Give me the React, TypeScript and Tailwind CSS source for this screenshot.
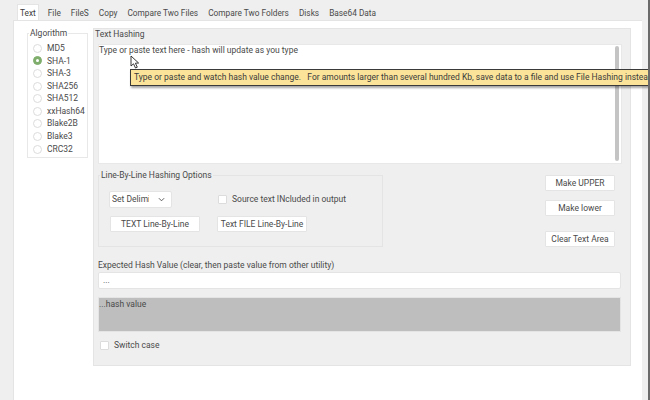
const font = "font-['Roboto','Noto_Sans',sans-serif]";

const tabs = ["Text", "File", "FileS", "Copy", "Compare Two Files", "Compare Two Folders", "Disks", "Base64 Data"];
const algorithms = ["MD5", "SHA-1", "SHA-3", "SHA256", "SHA512", "xxHash64", "Blake2B", "Blake3", "CRC32"];

function Btn({ label, className }: { label: string; className: string }) {
  return (
    <button className={`h-4 bg-white border border-[#e4e4e4] rounded-[1px] text-[8.5px] leading-none text-[#4a4a4a] text-center whitespace-nowrap ${className}`}>
      {label}
    </button>
  );
}

function Check() {
  return <span className="block w-[9px] h-[9px] bg-white border border-[#dcdcdc] rounded-[1px] shrink-0" />;
}

export default function App() {
  return (
    <div className={`${font} relative w-[650px] h-[400px] overflow-hidden bg-[#efefef] text-[8.5px] text-[#4a4a4a] flex flex-col pl-[13px] pr-2`}>
      {/* tab strip */}
      <div className="h-5 flex items-end pl-1 shrink-0 text-[8.3px]">
        {tabs.map((t, i) => (
          <span
            key={t}
            className={`h-4 flex items-center pt-[2px] whitespace-nowrap ${i === 0 ? "bg-white border border-[#e4e4e4] border-b-0 px-[2px] mr-1 text-[#3c3c3c]" : "px-[5px]"}`}
          >
            {t}
          </span>
        ))}
      </div>

      <div className="flex-1 bg-white border-l border-t border-[#e4e4e4] flex pl-[13px] pt-[7px] gap-[5px] items-start">
        {/* algorithm */}
        <div className="relative mt-[5px] w-[61px] h-[125px] border border-[#e8e8e8] pt-2 pl-[5px] flex flex-col">
          <span className="absolute -top-[6px] left-[1px] bg-white px-px leading-[10px] text-[8.5px]">Algorithm</span>
          {algorithms.map((a, i) => (
            <div key={a} className="h-[12.6px] flex items-center gap-[5px] shrink-0">
              <span className={`w-[9px] h-[9px] rounded-full border flex items-center justify-center shrink-0 ${i === 1 ? "bg-[#7fae6c] border-[#7fae6c]" : "bg-white border-[#dcdcdc]"}`}>
                {i === 1 && <span className="w-[3px] h-[3px] rounded-full bg-white" />}
              </span>
              <span>{a}</span>
            </div>
          ))}
        </div>

        {/* text hashing */}
        <div className="relative w-[538px] h-[338px] bg-[#efefef] border border-[#e4e4e4] px-1 pt-[15px]">
          <span className="absolute top-0 left-[1px] leading-[10px] text-[8.5px]">Text Hashing</span>

          <div className="relative h-[120px] w-[524px] bg-white border border-[#e8e8e8] leading-[10px] text-[8.5px]">
            Type or paste text here - hash will update as you type
            <span className="absolute right-[2px] top-[1px] bottom-[2px] w-1 rounded-sm bg-[#c4c4c4]" />
          </div>

          <div className="flex justify-between pr-[11px] mt-[11px]">
            <div className="relative w-[285px] h-[72px] border border-[#e4e4e4] pt-[15px] pl-[10px]">
              <span className="absolute -top-[6px] left-[1px] bg-[#efefef] px-px leading-[10px] text-[8.5px]">Line-By-Line Hashing Options</span>
              <div className="flex items-center h-[17px]">
                <div className="w-[63px] h-[17px] bg-white border border-[#e4e4e4] rounded-[2px] flex items-center">
                  <span className="w-[37px] ml-[2px] overflow-hidden whitespace-nowrap">Set Delimi</span>
                  <svg viewBox="0 0 8 8" className="w-[7px] h-[7px] ml-[9px]" fill="none" stroke="#4a4a4a" strokeWidth="1">
                    <path d="M1 2.5 L4 5.5 L7 2.5" />
                  </svg>
                </div>
                <span className="ml-[46px] mr-[5px]"><Check /></span>
                <span className="whitespace-nowrap">Source text INcluded in output</span>
              </div>
              <div className="flex gap-[17px] mt-2 pl-px">
                <Btn label="TEXT Line-By-Line" className="w-[90px]" />
                <Btn label="Text FILE Line-By-Line" className="w-[90px]" />
              </div>
            </div>

            <div className="flex flex-col w-[70px]">
              <Btn label="Make UPPER" className="w-[70px] mb-[9px]" />
              <Btn label="Make lower" className="w-[70px] mb-[15px]" />
              <Btn label="Clear Text Area" className="w-[70px]" />
            </div>
          </div>

          <div className="mt-[13px] leading-[10px]">Expected Hash Value (clear, then paste value from other utility)</div>
          <div className="mt-[2px] h-[17px] w-[523px] bg-white border border-[#e4e4e4] rounded-[2px] pl-[4px] flex items-center">...</div>
          <div className="mt-2 h-[35px] w-[523px] bg-[#bebebe] border border-[#e4e4e4] leading-[10px] pt-px">...hash value</div>
          <div className="mt-[9px] ml-[2px] flex items-center gap-[5px] h-[9px]">
            <Check />
            <span>Switch case</span>
          </div>
        </div>
      </div>

      {/* tooltip */}
      <div className="absolute left-[130px] top-[69px] h-[17px] w-[530px] bg-[#fbe49a] border border-[#3a3a3a] shadow-[1px_2px_2px_rgba(0,0,0,0.35)] pl-[3px] flex items-center whitespace-nowrap text-[#3c3c3c]">
        Type or paste and watch hash value change.&nbsp;&nbsp; For amounts larger than several hundred Kb, save data to a file and use File Hashing instead.
      </div>

      {/* mouse pointer */}
      <svg viewBox="0 0 10 14" className="absolute left-[130px] top-[55px] w-[10px] h-[14px]">
        <path d="M1 1 L1 11 L3.5 8.8 L5.5 13 L7.3 12.2 L5.4 8.2 L8.6 8 Z" fill="#fff" stroke="#222" strokeWidth="0.9" />
      </svg>

      {/* window edge */}
      <div className="absolute right-0 top-0 bottom-0 w-[2px] bg-[#6a6a6a]" />
    </div>
  );
}
